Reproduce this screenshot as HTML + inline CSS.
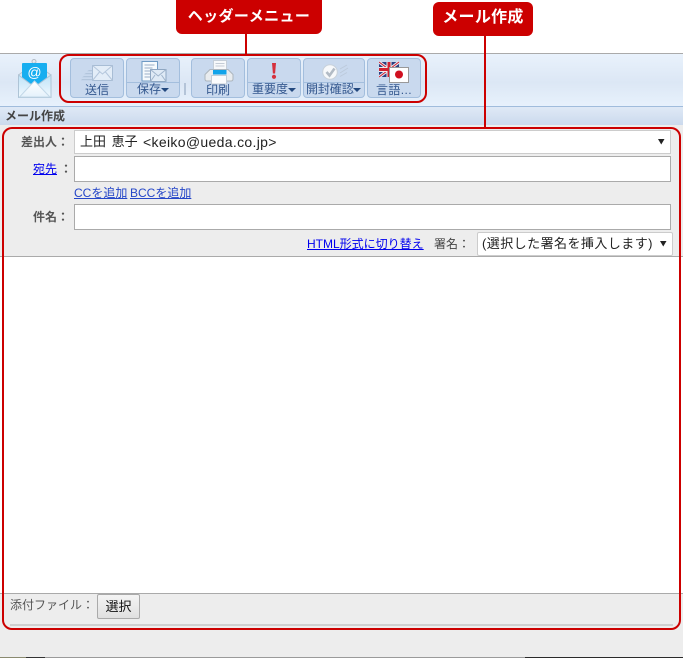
<!DOCTYPE html>
<html lang="ja"><head><meta charset="utf-8"><style>
html,body{margin:0;padding:0}
body{width:683px;height:658px;position:relative;overflow:hidden;background:#fff;font-family:"Liberation Sans","Noto Sans CJK JP",sans-serif;font-size:12px;color:#333}
div,a,span,svg{position:absolute;box-sizing:border-box}
a{color:#00e;text-decoration:underline;white-space:nowrap}
.t{white-space:nowrap;line-height:16px}
.btn{top:58px;height:40px;border:1px solid #a3bedd;border-radius:4px;background:#c9d9ee}
.lbl{left:0;right:0;text-align:center;color:#34588f;font-size:12px;line-height:14px;white-space:nowrap}
.div{left:0;right:0;top:23px;height:1px;background:#a3bedd}
.tri{width:0;height:0;border-left:4.500px solid transparent;border-right:4.500px solid transparent;border-top:4px solid #23497f}
.inp{background:#fff;border:1px solid #aaa;left:74px;width:597px}
.lab{font-size:12px;font-weight:bold;color:#555;white-space:nowrap;line-height:16px}
.call{background:#c00;color:#fff;font-weight:bold;text-align:center;border-radius:6px;white-space:nowrap}
</style></head><body>
<div style="left:0;top:53px;width:683px;height:54px;border-top:1px solid #aaa;border-bottom:1px solid #a0bcdc;background:linear-gradient(#e9f2fc,#dce7f5 55%,#e7f1fc)"></div>
<div style="left:0;top:107px;width:683px;height:20px;background:linear-gradient(#dfe9f6,#c9d8ec)"></div>
<div class="t" style="left:5px;top:108px;font-weight:bold;color:#444">メール作成</div>
<div style="left:0;top:125px;width:683px;height:533px;background:#ededed"></div>
<div style="left:0;top:657px;width:683px;height:1px;background:#9a9a9a"></div>
<div style="left:0;top:657px;width:26px;height:1px;background:#8a8a70"></div>
<div style="left:26px;top:657px;width:19px;height:1px;background:#333"></div>
<div style="left:525px;top:657px;width:158px;height:1px;background:#2a2a2a"></div>

<svg style="left:18px;top:59px" width="34" height="40" viewBox="0 0 34 40">
<defs><linearGradient id="g1" x1="0" y1="0" x2="0" y2="1"><stop offset="0" stop-color="#bfe3f8"/><stop offset="1" stop-color="#f2f9fe"/></linearGradient><linearGradient id="g2" x1="0" y1="0" x2="0" y2="1"><stop offset="0" stop-color="#fff"/><stop offset="1" stop-color="#e4f1fb"/></linearGradient></defs>
<circle cx="16" cy="2.500" r="2" fill="#e8ecf0" stroke="#b4bcc6"/>
<path d="M0.500 16 L16.500 4 L33 16 V38.500 H0.500Z" fill="#d7e6f2" stroke="#b5c3cf"/>
<path d="M4 5 Q4 4 5 4 H28 Q29 4 29 5 V19 L16.500 28 L4 19Z" fill="#17aef0"/>
<text x="16.500" y="18" font-size="14" font-family="Liberation Sans" fill="#fff" text-anchor="middle">@</text>
<path d="M0.500 16 L16.500 28 L33 16 V38.500 H0.500Z" fill="url(#g1)" stroke="#aec4d6"/>
<path d="M1.500 38 L16.500 22 L32 38Z" fill="url(#g2)" stroke="#c2d8e8"/>
</svg>

<div class="btn" style="left:70px;width:54px"><div class="lbl" style="top:24px">送信</div>
<svg style="left:10px;top:4px" width="36" height="20" viewBox="0 0 36 20"><g fill="#b2c5dc"><path d="M8 7h5v1.200H6zM5 10h8v1.200H3zM3 13h10v1.200H1zM1 16h12v1.200H0z"/></g><rect x="11.500" y="2.500" width="20" height="15" fill="#e3edf8" stroke="#a8bdd5"/><path d="M11.500 2.500L21.500 11 31.500 2.500M11.500 17.500L18.500 9M31.500 17.500L24.500 9" fill="none" stroke="#b4c6dc"/></svg></div>
<div class="btn" style="left:126px;width:54px"><div class="div"></div><div class="lbl" style="top:23px;text-align:left;left:10px">保存</div><div class="tri" style="left:34px;top:29px"></div>
<svg style="left:14px;top:1px" width="36" height="23" viewBox="0 0 36 23"><path d="M1 1.500H16.500V21H1Z" fill="#f6fafd" stroke="#6f9ac4"/><path d="M3.500 5h10M3.500 8h8M3.500 11h7M3.500 14h6M3.500 17h6" stroke="#9aaec6"/><rect x="9.500" y="9.500" width="15.500" height="12" fill="#dfeaf6" stroke="#8ea6c2"/><path d="M9.500 9.500L17.200 16 25 9.500M9.500 21.500L14 15M25 21.500L20.500 15" fill="none" stroke="#9fb4cc"/></svg></div>
<div style="left:184px;top:83px;width:2px;height:12px;background:#b4c4d8"></div>
<div class="btn" style="left:191px;width:54px"><div class="lbl" style="top:24px">印刷</div>
<svg style="left:12px;top:1px" width="30" height="25" viewBox="0 0 30 25"><rect x="9.500" y="0.500" width="13" height="11" fill="#f7f9fb" stroke="#c5ced8"/><path d="M11.500 3.500h9M11.500 6h9" stroke="#c4ccd6"/><path d="M6 9.500H24L29 14.500V19Q29 21 27 21H3Q1 21 1 19V14.500Z" fill="#e9ecef" stroke="#adb6be"/><rect x="9" y="10" width="13.500" height="4.500" fill="#12a4ea"/><rect x="7.500" y="15.500" width="15" height="8.500" fill="#fbfcfd" stroke="#c5ced8"/></svg></div>
<div class="btn" style="left:247px;width:54px"><div class="div"></div><div class="lbl" style="top:23px;text-align:left;left:4px">重要度</div><div class="tri" style="left:40px;top:29px"></div>
<svg style="left:21px;top:4px" width="10" height="17" viewBox="0 0 10 17"><path d="M3 0H7L6.100 10.500H3.900Z" fill="#d5303c"/><circle cx="5" cy="13.800" r="2.100" fill="#d5303c"/></svg></div>
<div class="btn" style="left:303px;width:62px"><div class="div"></div><div class="lbl" style="top:23px;text-align:left;left:2px;letter-spacing:-.1px">開封確認</div><div class="tri" style="left:49px;top:29px"></div>
<svg style="left:17px;top:4px" width="30" height="18" viewBox="0 0 30 18"><circle cx="9" cy="9" r="7.300" fill="#f7f9fb" stroke="#c8d1da"/><path d="M5.500 9l3 3.500 5-7" fill="none" stroke="#b2bbc5" stroke-width="2.600"/><path d="M19 6l7-4M19 10l8-5M19 13.500l7-4" stroke="#bccadb"/></svg></div>
<div class="btn" style="left:367px;width:54px"><div class="lbl" style="top:24px;letter-spacing:.4px">言語...</div>
<svg style="left:11px;top:2px" width="32" height="24" viewBox="0 0 32 24"><rect x="0" y="1" width="20" height="15" fill="#2b3f80"/><path d="M0 1L20 16M20 1L0 16" stroke="#e8e8f0" stroke-width="3"/><path d="M0 1L20 16M20 1L0 16" stroke="#d02030" stroke-width="1"/><path d="M10 1V16M0 8.500H20" stroke="#eee" stroke-width="5"/><path d="M10 1V16M0 8.500H20" stroke="#d02030" stroke-width="3"/><rect x="10.500" y="6.500" width="19" height="15" fill="#fff" stroke="#999"/><circle cx="20" cy="13.500" r="4" fill="#d01020"/></svg></div>

<div class="call" style="left:176px;top:0;width:146px;height:34px;line-height:33px;border-radius:0 0 6px 6px;font-size:15px;letter-spacing:.4px">ヘッダーメニュー</div>
<div class="call" style="left:433px;top:2px;width:100px;height:34px;line-height:32px;font-size:16px;letter-spacing:.3px">メール作成</div>
<div style="left:245px;top:34px;width:2px;height:20px;background:#c00"></div>
<div style="left:484px;top:36px;width:2px;height:92px;background:#c00"></div>
<div style="left:59px;top:54px;width:368px;height:49px;border:2px solid #c00;border-radius:10px"></div>

<div class="lab" style="left:21px;top:134px">差出人：</div>
<div class="inp" style="top:130px;height:24px;border-color:#ccc"></div>
<div class="t" style="left:80px;top:134px;font-size:13px;color:#222;word-spacing:2px">上田 恵子</div>
<div class="t" style="left:143px;top:134px;font-size:14px;letter-spacing:.33px;color:#222">&lt;keiko@ueda.co.jp&gt;</div>
<svg style="left:658px;top:138px" width="7" height="7"><path d="M0 1H6.500L3.250 6.500Z" fill="#222"/></svg>
<a class="lab" style="left:33px;top:161px;position:absolute;font-weight:normal;color:#00e">宛先</a>
<div class="lab" style="left:60px;top:161px">：</div>
<div class="inp" style="top:156px;height:26px"></div>
<a class="t" style="left:74px;top:185px;color:#2546c8">CCを追加</a>
<a class="t" style="left:130px;top:185px;color:#2546c8">BCCを追加</a>
<div class="lab" style="left:33px;top:209px">件名：</div>
<div class="inp" style="top:204px;height:26px"></div>
<a class="t" style="left:307px;top:236px">HTML形式に切り替え</a>
<div class="t" style="left:434px;top:236px;color:#444">署名：</div>
<div style="left:477px;top:232px;width:196px;height:24px;background:#fff;border:1px solid #ccc;border-radius:2px"></div>
<div class="t" style="left:482px;top:236px;font-size:13px;letter-spacing:.45px;color:#222">(選択した署名を挿入します)</div>
<svg style="left:660px;top:240px" width="7" height="7"><path d="M0 1H6.500L3.250 6.500Z" fill="#222"/></svg>
<div style="left:0;top:256px;width:683px;height:338px;background:#fff;border-top:1px solid #aaa;border-bottom:1px solid #aaa"></div>
<div class="t" style="left:10px;top:597px;color:#555">添付ファイル：</div>
<div style="left:97px;top:594px;width:43px;height:25px;border:1px solid #aaa;border-radius:2px;background:linear-gradient(#f4f4f4,#e0e0e0);text-align:center;line-height:23px;color:#111;font-size:13px">選択</div>
<div style="left:10px;top:624px;width:663px;height:2px;background:#cfcfcf"></div>
<div style="left:2px;top:127px;width:679px;height:503px;border:2px solid #c00;border-radius:10px"></div>
</body></html>
